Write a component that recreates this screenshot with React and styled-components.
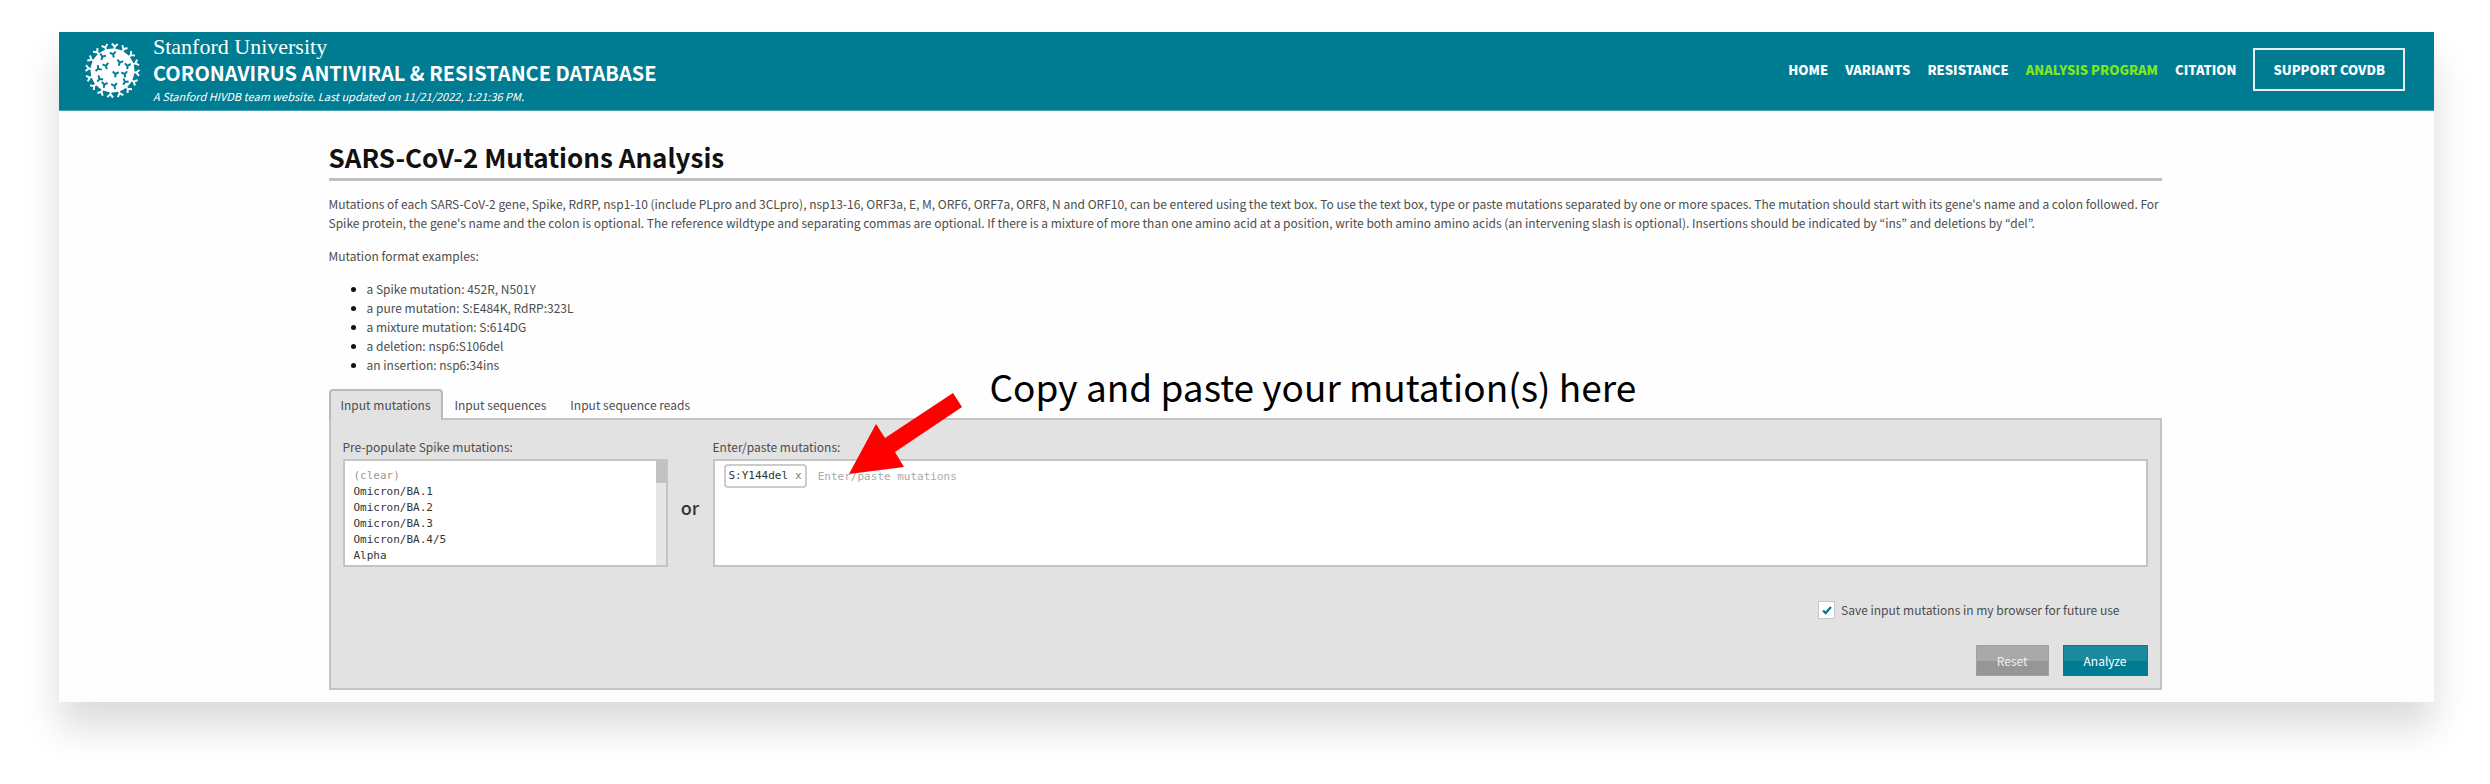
import React, { useState } from 'react';
import styled, { createGlobalStyle } from 'styled-components';

const sans = '"Noto Sans CJK KR", "Noto Sans", sans-serif';
const mono = '"DejaVu Sans Mono", "Liberation Mono", monospace';
const teal = '#007c92';

const GlobalStyle = createGlobalStyle`
  * {
    box-sizing: border-box;
  }
  body {
    margin: 0;
    background: #fff;
    color: #4d4d4d;
    font-family: ${sans};
    font-size: 12px;
    line-height: 19px;
  }
`;

const Page = styled.div`
  margin: 32px 56px 82px 59px;
  padding-bottom: 12px;
  background: #fefefe;
  box-shadow: 0 26px 36px rgba(0, 0, 0, 0.14);
`;

const Header = styled.header`
  display: flex;
  align-items: center;
  justify-content: space-between;
  min-height: 79px;
  padding: 0 29px 0 26px;
  background: ${teal};
  border-bottom: 1px solid #4ba3b3;
  color: #fff;
`;

const Brand = styled.a`
  display: flex;
  align-items: center;
  gap: 13px;
  padding-bottom: 2px;
  color: inherit;
  text-decoration: none;
`;

const BrandText = styled.div`
  display: flex;
  flex-direction: column;
`;

const University = styled.span`
  font-family: "Liberation Serif", serif;
  font-size: 22px;
  line-height: 26px;
`;

const SiteName = styled.span`
  font-size: 20px;
  font-weight: 700;
  line-height: 26px;
`;

const Updated = styled.em`
  font-size: 11px;
  line-height: 20px;
`;

const Nav = styled.nav`
  display: flex;
  align-items: center;
  gap: 17px;
  padding-bottom: 4px;
`;

const NavLink = styled.a`
  color: ${(props) => (props.$active ? '#7fe61c' : '#fff')};
  font-size: 13px;
  font-weight: 900;
  text-decoration: none;
`;

const SupportLink = styled(NavLink)`
  padding: 10px 18px;
  border: 2px solid #e6f2f4;
`;

const Content = styled.main`
  max-width: 1836px;
  margin: 0 auto;
  padding-right: 3px;
`;

const Title = styled.h1`
  margin: 0 0 13px;
  padding: 28px 0 3px;
  border-bottom: 3px solid #bfbfbf;
  color: #111;
  font-size: 26px;
  font-weight: 700;
  line-height: 36px;
`;

const Paragraph = styled.p`
  margin: 0 0 14px;
`;

const Examples = styled.ul`
  margin: 0 0 15px;
  padding-left: 38px;

  li::marker {
    color: #111;
  }
`;

const Analysis = styled.form`
  position: relative;
  margin: 0;
`;

const TabList = styled.div`
  display: flex;
  margin-bottom: -2px;
`;

const Tab = styled.button`
  height: 31px;
  padding: 0 10px 2px;
  border: 2px solid ${(props) => (props.$active ? '#bababa' : 'transparent')};
  border-bottom: 0;
  border-radius: 4px 4px 0 0;
  background: ${(props) => (props.$active ? '#e2e2e2' : 'transparent')};
  color: #4d4d4d;
  font: 12px/19px ${sans};
  z-index: 1;
`;

const Panel = styled.div`
  padding: 17px 12px 12px;
  border: 2px solid #c4c4c4;
  background: #e2e2e2;
`;

const Fields = styled.div`
  display: flex;
`;

const Field = styled.div`
  display: flex;
  flex-direction: column;
  flex: ${(props) => (props.$wide ? '1' : '0 0 325px')};
`;

const FieldLabel = styled.label`
  height: 22px;
`;

const PresetBox = styled.div`
  position: relative;
  display: flex;
  height: 108px;
  border: 2px solid #c4c4c4;
  background: #fff;
`;

const Presets = styled.select`
  flex: 1;
  padding: 7px 0 0 9px;
  border: 0;
  border-radius: 0;
  outline: 0;
  background: transparent;
  color: #333;
  font: 11px/13px ${mono};
  scrollbar-width: none;

  option {
    min-height: 16px;
    padding: 1px 0 2px;
  }
  option:first-child {
    color: #999;
  }
`;

const ScrollTrack = styled.div`
  width: 10px;
  background: #e6e6e6;
`;

const ScrollThumb = styled.div`
  height: 22px;
  background: #c1c1c1;
`;

const Or = styled.div`
  flex: 0 0 45px;
  padding-top: 58px;
  color: #333;
  font-size: 18px;
  font-weight: 500;
  line-height: 24px;
  text-align: center;
`;

const TagBox = styled.div`
  display: flex;
  align-items: flex-start;
  gap: 11px;
  height: 108px;
  padding: 3px 9px;
  border: 2px solid #c4c4c4;
  background: #fff;
`;

const Tag = styled.span`
  display: flex;
  align-items: center;
  gap: 7px;
  height: 24px;
  padding: 0 3px;
  border: 2px solid #ccc;
  border-radius: 4px;
  color: #333;
  font: 11px/16px ${mono};
`;

const RemoveTag = styled.button`
  padding: 0;
  border: 0;
  background: none;
  color: #777;
  font: 11px/16px ${mono};
`;

const TagInput = styled.input`
  flex: 1;
  height: 24px;
  padding: 0;
  border: 0;
  outline: 0;
  background: transparent;
  font: 11px/16px ${mono};

  &::placeholder {
    color: #aaa;
  }
`;

const SaveLabel = styled.label`
  display: flex;
  align-items: center;
  justify-content: flex-end;
  gap: 6px;
  margin: 33px 28px 26px 0;
`;

const Checkbox = styled.input`
  appearance: none;
  width: 17px;
  height: 18px;
  margin: 0;
  border: 1px solid #c8c8c8;
  background: #fff;

  &:checked {
    background: #fff
      url("data:image/svg+xml,%3Csvg xmlns='http://www.w3.org/2000/svg' viewBox='0 0 16 16'%3E%3Cpath d='M3.5 8.5l3 3 6-7' fill='none' stroke='%23007c92' stroke-width='2.6'/%3E%3C/svg%3E")
      center / 14px no-repeat;
  }
`;

const Actions = styled.div`
  display: flex;
  justify-content: flex-end;
  gap: 14px;
`;

const Button = styled.button`
  height: 31px;
  padding: 0 20px;
  border: 1px solid ${(props) => (props.$primary ? '#12798b' : '#a0a0a0')};
  background: ${(props) => (props.$primary
    ? 'linear-gradient(#1b8a9e 50%, #007c92 50%)'
    : 'linear-gradient(#a9a9a9 50%, #969696 50%)')};
  color: ${(props) => (props.$primary ? '#fff' : '#eee')};
  font: 12px/19px ${sans};
`;

const Hint = styled.div`
  position: absolute;
  top: -26px;
  left: 661px;
  color: #000;
  font-size: 37px;
  line-height: 46px;
  white-space: nowrap;
`;

const Arrow = styled.svg`
  position: absolute;
  top: 4px;
  left: 520px;
  width: 114px;
  height: 82px;
  pointer-events: none;
`;

const LogoSvg = styled.svg`
  width: 55px;
  height: 57px;
`;

// one spike: a short stem that splits in two
const spike = 'M0 10V0L-9 -7M0 0L9 -7';

const innerSpikes = [
  [97, 75, 20], [130, 68, -10], [108, 103, -15], [150, 93, 15], [174, 103, 5],
  [84, 112, 50], [137, 128, 5], [165, 128, -10], [88, 143, 40], [103, 160, 10],
  [134, 164, -10], [166, 152, 30],
];

const Logo = () => (
  <LogoSvg viewBox="44 31 168 172" aria-hidden="true">
    <circle cx="128" cy="117" r="67" fill="#fff" />
    {Array.from({ length: 16 }, (_, i) => (
      <path
        key={i}
        d="M0 -60V-73L-9 -82M0 -73L9 -82"
        transform={`translate(128 117) rotate(${i * 22.5 + 5})`}
        fill="none"
        stroke="#fff"
        strokeWidth="6"
      />
    ))}
    {innerSpikes.map(([x, y, angle]) => (
      <path
        key={`${x}-${y}`}
        d={spike}
        transform={`translate(${x} ${y}) rotate(${angle})`}
        fill="none"
        stroke={teal}
        strokeWidth="6"
      />
    ))}
  </LogoSvg>
);

const navItems = ['HOME', 'VARIANTS', 'RESISTANCE', 'ANALYSIS PROGRAM', 'CITATION'];

const tabs = ['Input mutations', 'Input sequences', 'Input sequence reads'];

const examples = [
  'a Spike mutation: 452R, N501Y',
  'a pure mutation: S:E484K, RdRP:323L',
  'a mixture mutation: S:614DG',
  'a deletion: nsp6:S106del',
  'an insertion: nsp6:34ins',
];

const presets = ['(clear)', 'Omicron/BA.1', 'Omicron/BA.2', 'Omicron/BA.3', 'Omicron/BA.4/5', 'Alpha'];

export default function App() {
  const [activeTab, setActiveTab] = useState(tabs[0]);
  const [mutations, setMutations] = useState(['S:Y144del']);
  const [save, setSave] = useState(true);

  return (
    <Page>
      <GlobalStyle />
      <Header>
        <Brand href="#home">
          <Logo />
          <BrandText>
            <University>Stanford University</University>
            <SiteName>CORONAVIRUS ANTIVIRAL &amp; RESISTANCE DATABASE</SiteName>
            <Updated>A Stanford HIVDB team website. Last updated on 11/21/2022, 1:21:36 PM.</Updated>
          </BrandText>
        </Brand>
        <Nav>
          {navItems.map((item) => (
            <NavLink key={item} href="#nav" $active={item === 'ANALYSIS PROGRAM'}>{item}</NavLink>
          ))}
          <SupportLink href="#support">SUPPORT COVDB</SupportLink>
        </Nav>
      </Header>

      <Content>
        <Title>SARS-CoV-2 Mutations Analysis</Title>
        <Paragraph>
          Mutations of each SARS-CoV-2 gene, Spike, RdRP, nsp1-10 (include PLpro and 3CLpro), nsp13-16,
          ORF3a, E, M, ORF6, ORF7a, ORF8, N and ORF10, can be entered using the text box. To use the text
          box, type or paste mutations separated by one or more spaces. The mutation should start with its
          gene's name and a colon followed. For Spike protein, the gene's name and the colon is optional.
          The reference wildtype and separating commas are optional. If there is a mixture of more than one
          amino acid at a position, write both amino amino acids (an intervening slash is optional).
          Insertions should be indicated by “ins” and deletions by “del”.
        </Paragraph>
        <Paragraph>Mutation format examples:</Paragraph>
        <Examples>
          {examples.map((text) => <li key={text}>{text}</li>)}
        </Examples>

        <Analysis onSubmit={(e) => e.preventDefault()}>
          <TabList role="tablist">
            {tabs.map((tab) => (
              <Tab
                key={tab}
                type="button"
                role="tab"
                aria-selected={tab === activeTab}
                $active={tab === activeTab}
                onClick={() => setActiveTab(tab)}
              >
                {tab}
              </Tab>
            ))}
          </TabList>
          <Panel>
            <Fields>
              <Field>
                <FieldLabel htmlFor="presets">Pre-populate Spike mutations:</FieldLabel>
                <PresetBox>
                  <Presets id="presets" size={6}>
                    {presets.map((name) => <option key={name}>{name}</option>)}
                  </Presets>
                  <ScrollTrack aria-hidden="true">
                    <ScrollThumb />
                  </ScrollTrack>
                </PresetBox>
              </Field>
              <Or>or</Or>
              <Field $wide>
                <FieldLabel htmlFor="mutations">Enter/paste mutations:</FieldLabel>
                <TagBox>
                  {mutations.map((name) => (
                    <Tag key={name}>
                      {name}
                      <RemoveTag
                        type="button"
                        onClick={() => setMutations(mutations.filter((m) => m !== name))}
                      >
                        x
                      </RemoveTag>
                    </Tag>
                  ))}
                  <TagInput id="mutations" placeholder="Enter/paste mutations" />
                </TagBox>
              </Field>
            </Fields>
            <SaveLabel>
              <Checkbox type="checkbox" checked={save} onChange={(e) => setSave(e.target.checked)} />
              Save input mutations in my browser for future use
            </SaveLabel>
            <Actions>
              <Button type="button" onClick={() => setMutations([])}>Reset</Button>
              <Button type="submit" $primary>Analyze</Button>
            </Actions>
          </Panel>
          <Hint>Copy and paste your mutation(s) here</Hint>
          <Arrow viewBox="0 0 114 82" aria-hidden="true">
            <path d="M104 0L113 14L46 59L55 74L0 81L27 31L36 45Z" fill="#f00" />
          </Arrow>
        </Analysis>
      </Content>
    </Page>
  );
}
